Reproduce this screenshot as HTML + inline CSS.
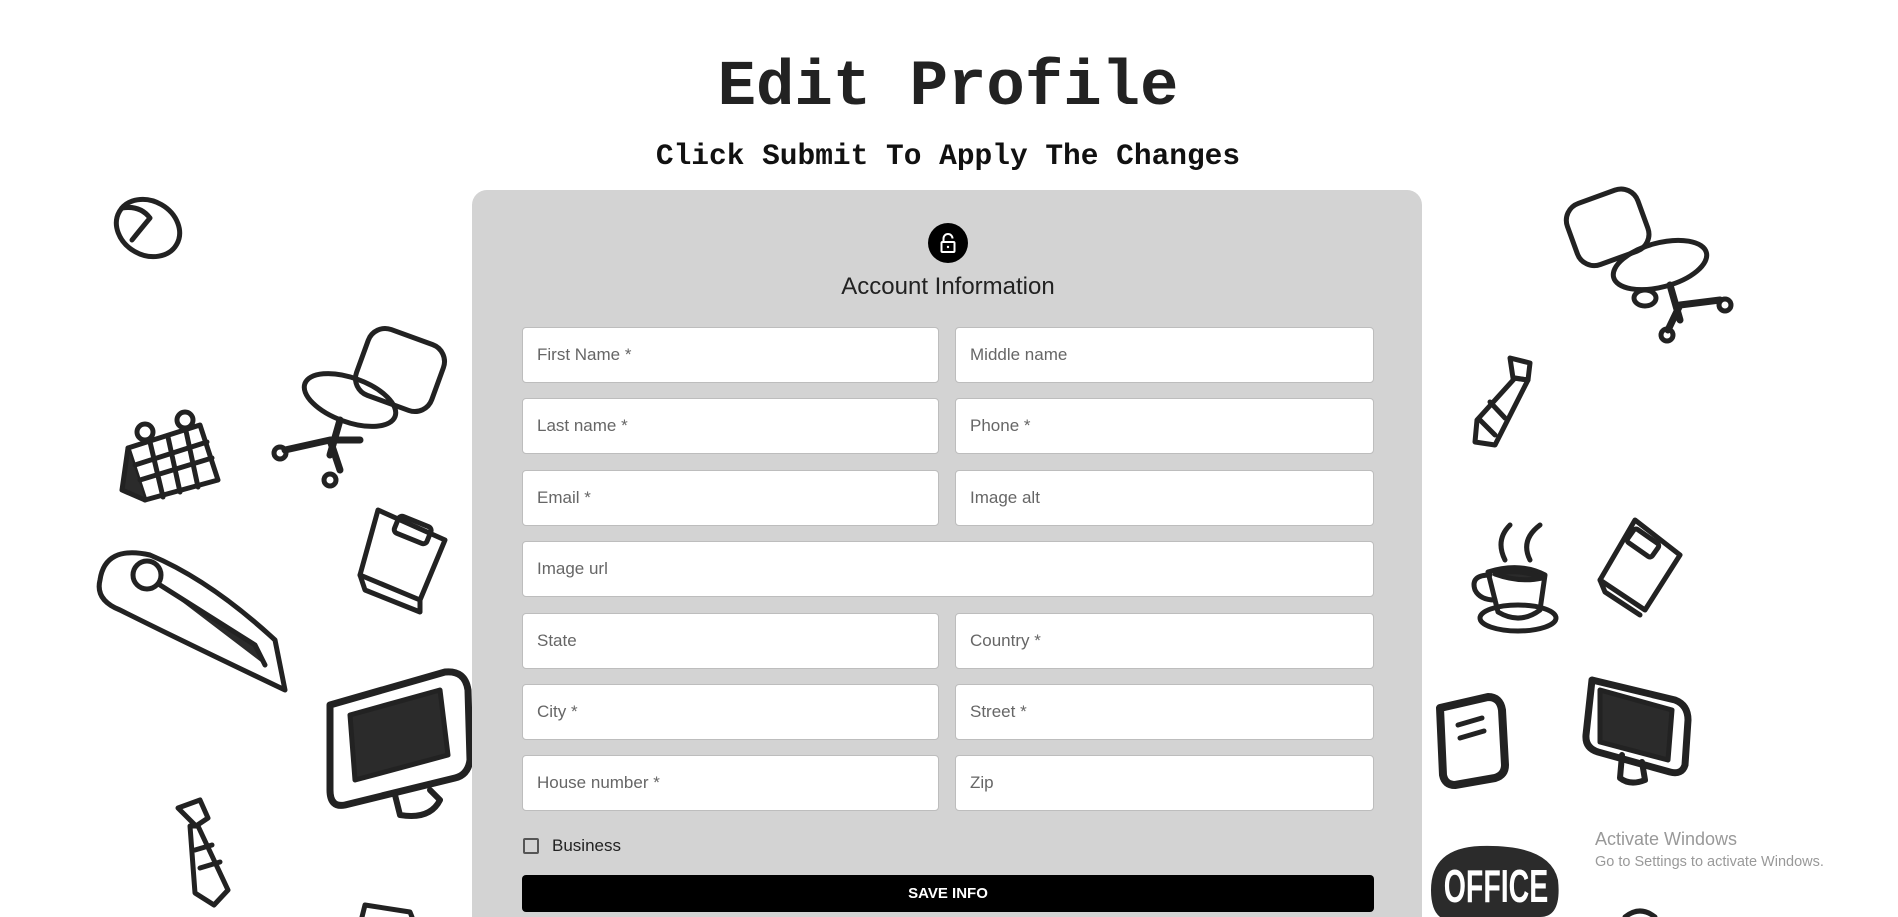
<!DOCTYPE html>
<html><head><meta charset="utf-8"><style>
html,body{margin:0;padding:0;width:1898px;height:917px;overflow:hidden;background:#fff;font-family:"Liberation Sans",sans-serif;position:relative;}
.t1{position:absolute;left:0;width:1896px;top:52px;text-align:center;font-family:"Liberation Mono",monospace;font-weight:bold;font-size:64px;color:#222;}
.t2{position:absolute;left:0;width:1896px;top:139px;text-align:center;font-family:"Liberation Mono",monospace;font-weight:bold;font-size:29.5px;color:#111;}
.card{position:absolute;left:472px;top:190px;width:950px;height:727px;background:#d3d3d3;border-radius:15px 15px 0 0;}
.lock{position:absolute;left:928px;top:223px;width:40px;height:40px;border-radius:50%;background:#000;}
.ai{position:absolute;left:0;width:1896px;top:273px;text-align:center;font-size:24px;color:#222;}
.in{position:absolute;background:#fff;border:1px solid #bdbdbd;border-radius:4px;box-sizing:border-box;height:56px;font-size:17px;color:#666;padding-left:14px;line-height:54px;}
.l{left:522px;width:417px}.r{left:955px;width:419px}.w{left:522px;width:852px}
.cb{position:absolute;left:523px;top:838px;width:16px;height:16px;border:2px solid #555;border-radius:2px;box-sizing:border-box;}
.bz{position:absolute;left:552px;top:836px;font-size:17px;color:#222;}
.btn{position:absolute;left:522px;top:875px;width:852px;height:37px;background:#000;border-radius:4px;color:#fff;font-weight:bold;font-size:15px;text-align:center;line-height:37px;}
.aw{position:absolute;left:1595px;top:829px;font-size:18px;color:#999;}
.aw2{position:absolute;left:1595px;top:854px;font-size:14.5px;color:#999;}
svg.d{position:absolute;left:0;top:0;}
</style></head><body>
<svg class="d" width="1898" height="917" fill="none" stroke="#222" stroke-width="5" stroke-linejoin="round" stroke-linecap="round">
<ellipse cx="148" cy="228" rx="33" ry="27" transform="rotate(30 148 228)"/>
<path d="M122 208 Q140 205 150 218 M150 218 Q140 230 132 240"/>
<path d="M128 448 L200 425 L218 480 L145 500 Z"/><path d="M128 448 L122 490 L145 500" fill="#2b2b2b"/>
<path d="M135 465 L207 442 M140 480 L212 458 M150 442 L163 497 M168 437 L180 492 M186 431 L198 487"/>
<circle cx="145" cy="432" r="8"/><circle cx="185" cy="420" r="8"/>
<rect x="360" y="335" width="80" height="70" rx="18" transform="rotate(20 400 370)"/>
<ellipse cx="350" cy="400" rx="48" ry="22" transform="rotate(20 350 400)"/>
<path d="M340 420 L330 455 M330 440 L285 450 M330 440 L340 470 M330 440 L360 440" stroke-width="7"/>
<circle cx="280" cy="453" r="6"/><circle cx="330" cy="480" r="6"/>
<path d="M378 510 L445 540 L420 600 L360 575 Z"/><path d="M360 575 L365 590 L420 612 L420 600"/><rect x="395" y="520" width="35" height="18" rx="4" transform="rotate(22 410 530)"/>
<path d="M100 580 Q105 545 150 555 Q210 580 275 640 L285 690 Q180 640 120 610 Q95 600 100 580 Z"/>
<circle cx="147" cy="575" r="14"/><path d="M160 585 L255 645 L265 665" fill="#2b2b2b"/>
<path d="M330 705 L445 672 Q465 670 468 690 L470 760 Q468 775 455 778 L345 805 Q330 808 330 790 Z" stroke-width="7"/>
<path d="M350 715 L440 690 L448 755 L355 780 Z" fill="#2b2b2b"/>
<path d="M395 795 L400 815 Q430 820 440 800 L430 790" stroke-width="6"/>
<path d="M178 808 L200 800 L208 818 L196 826 Z"/><path d="M190 826 L198 826 L228 890 L214 905 L195 893 Z"/><path d="M195 850 L212 845 M200 868 L220 862"/>
<rect x="1570" y="195" width="75" height="65" rx="18" transform="rotate(-20 1607 227)"/>
<ellipse cx="1660" cy="265" rx="48" ry="22" transform="rotate(-15 1660 265)"/>
<path d="M1670 285 L1680 320 M1680 305 L1720 300 M1680 305 L1668 330" stroke-width="7"/>
<circle cx="1725" cy="305" r="6"/><circle cx="1667" cy="335" r="6"/><ellipse cx="1645" cy="298" rx="11" ry="8"/>
<path d="M1510 358 L1530 363 L1528 380 L1513 378 Z"/><path d="M1515 378 L1528 380 L1495 445 L1475 442 L1477 420 Z"/><path d="M1480 420 L1495 435 M1490 402 L1505 418"/>
<path d="M1488 572 Q1520 562 1545 575 L1540 610 Q1520 625 1498 612 Z"/><path d="M1490 575 Q1470 575 1475 590 Q1480 600 1495 600"/>
<ellipse cx="1518" cy="618" rx="38" ry="13"/><path d="M1505 560 Q1495 540 1510 525 M1530 560 Q1520 540 1540 525"/>
<path d="M1495 574 Q1520 568 1542 578 Q1520 583 1495 574 Z" fill="#2b2b2b"/>
<path d="M1635 520 L1680 555 L1645 610 L1600 580 Z"/><path d="M1600 580 L1605 592 L1640 615"/><rect x="1628" y="535" width="30" height="16" rx="3" transform="rotate(35 1643 543)"/>
<path d="M1440 708 L1488 697 Q1500 697 1502 710 L1505 765 Q1505 775 1495 778 L1455 785 Q1445 785 1443 775 Z" stroke-width="8"/>
<path d="M1458 725 L1482 718 M1460 738 L1484 731"/>
<path d="M1592 680 L1675 700 Q1688 705 1688 720 L1685 765 Q1682 775 1670 772 L1598 752 Q1585 748 1586 735 Z" stroke-width="7"/>
<path d="M1600 690 L1672 710 L1668 760 L1600 742 Z" fill="#2b2b2b"/>
<path d="M1622 755 L1620 778 Q1630 786 1645 780 L1642 762" stroke-width="6"/>
<path d="M1431 890 Q1431 848 1480 846 Q1550 844 1558 880 Q1562 917 1540 917 L1440 917 Q1431 910 1431 890 Z" fill="#2b2b2b" stroke="none"/>
<text x="0" y="0" fill="#fff" stroke="none" text-anchor="middle" font-family="Liberation Sans,sans-serif" font-weight="bold" font-size="46" transform="translate(1496 902) scale(0.62 1)">OFFICE</text>
<path d="M362 917 L365 905 L410 912 L412 917"/><path d="M1625 917 Q1640 905 1655 917"/>
</svg>
<div class="t1">Edit Profile</div>
<div class="t2">Click Submit To Apply The Changes</div>
<div class="card"></div>
<div class="lock"><svg width="40" height="40" viewBox="0 0 40 40" fill="none" stroke="#fff" stroke-width="2"><path d="M15.5 19 V15.5 A4.5 4.5 0 0 1 24.5 15.5"/><rect x="13.5" y="19" width="13" height="10" rx="1"/><circle cx="20" cy="24" r="1.2" fill="#fff" stroke="none"/></svg></div>
<div class="ai">Account Information</div>
<div class="in l" style="top:327px">First Name *</div><div class="in r" style="top:327px">Middle name</div>
<div class="in l" style="top:398px">Last name *</div><div class="in r" style="top:398px">Phone *</div>
<div class="in l" style="top:470px">Email *</div><div class="in r" style="top:470px">Image alt</div>
<div class="in w" style="top:541px">Image url</div>
<div class="in l" style="top:613px">State</div><div class="in r" style="top:613px">Country *</div>
<div class="in l" style="top:684px">City *</div><div class="in r" style="top:684px">Street *</div>
<div class="in l" style="top:755px">House number *</div><div class="in r" style="top:755px">Zip</div>
<div class="cb"></div><div class="bz">Business</div>
<div class="btn">SAVE INFO</div>
<div class="aw">Activate Windows</div>
<div class="aw2">Go to Settings to activate Windows.</div>
</body></html>
